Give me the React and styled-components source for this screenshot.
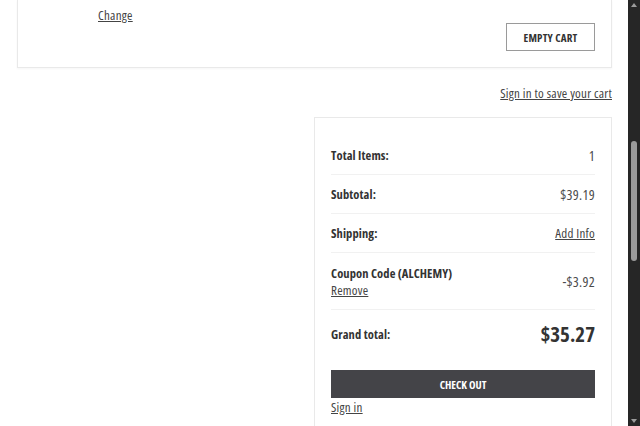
import styled, { createGlobalStyle } from 'styled-components';

const GlobalStyle = createGlobalStyle`
  html, body {
    margin: 0;
    padding: 0;
    background: #fff;
  }
  body {
    font-family: 'Open Sans', 'Liberation Sans', sans-serif;
    font-stretch: 75%;
    color: #333;
  }
`;

const Frame = styled.div`
  display: flex;
  height: 426px;
  overflow: hidden;
`;

const Main = styled.div`
  flex: 1;
  padding: 0 16px 0 17px;
`;

const TopCard = styled.div`
  display: flex;
  justify-content: space-between;
  align-items: flex-start;
  height: 68px;
  box-sizing: border-box;
  padding: 7px 16px 0 80px;
  border: 1px solid #e9e9e9;
  border-top: none;
  box-shadow: 0 1px 2px rgba(0, 0, 0, 0.04);
`;

const TextLink = styled.a`
  font-size: 13px;
  letter-spacing: 0.25px;
  color: #444;
  text-decoration: underline;
  cursor: pointer;
  line-height: 16px;
`;

const BlockLink = styled(TextLink)`
  display: block;
  width: fit-content;
`;

const OutlineButton = styled.button`
  margin-top: 16px;
  width: 89px;
  height: 28px;
  background: #fff;
  border: 1px solid #9a9a9a;
  font-family: inherit;
  font-stretch: 75%;
  font-size: 11px;
  font-weight: 700;
  color: #333;
  letter-spacing: 0.2px;
`;

const SaveRow = styled.div`
  display: flex;
  justify-content: flex-end;
  margin-top: 17px;
`;

const SummaryCard = styled.div`
  margin: 16px 0 0 auto;
  width: 298px;
  box-sizing: border-box;
  padding: 18px 16px 12px;
  border: 1px solid #e9e9e9;
`;

const Row = styled.div`
  display: flex;
  justify-content: space-between;
  align-items: center;
  height: ${(p) => p.h || 39}px;
  box-sizing: border-box;
  border-bottom: ${(p) => (p.last ? 'none' : '1px solid #f1f1f1')};
`;

const Label = styled.div`
  font-size: 12.5px;
  font-weight: 700;
  letter-spacing: 0.1px;
  color: #333;
  line-height: 17px;
`;

const Value = styled.div`
  font-size: ${(p) => (p.big ? 21 : 14)}px;
  font-weight: ${(p) => (p.big ? 700 : 400)};
  letter-spacing: ${(p) => (p.big ? 0 : 0.3)}px;
  color: ${(p) => (p.big ? '#333' : '#4a4a4a')};
`;

const Stack = styled.div`
  display: flex;
  flex-direction: column;
`;

const CheckoutButton = styled.button`
  display: block;
  width: 100%;
  height: 28px;
  margin-top: 12px;
  margin-bottom: 1px;
  background: #444448;
  border: none;
  color: #fff;
  font-family: inherit;
  font-stretch: 75%;
  font-size: 11px;
  font-weight: 700;
`;

const Scrollbar = styled.div`
  width: 12px;
  background: #262626;
  display: flex;
  flex-direction: column;
  align-items: center;
  justify-content: space-between;
  padding: 3px 0;
  box-sizing: border-box;
`;

const Thumb = styled.div`
  width: 6px;
  height: 120px;
  border-radius: 3px;
  background: #9b9b9b;
  margin-top: 134px;
  margin-bottom: auto;
`;

const Arrow = styled.div`
  width: 0;
  height: 0;
  border-left: 3px solid transparent;
  border-right: 3px solid transparent;
  ${(p) => (p.down ? 'border-top: 4px solid #9b9b9b;' : 'border-bottom: 4px solid #9b9b9b;')}
`;

export default function App() {
  return (
    <>
      <GlobalStyle />
      <Frame>
        <Main>
          <TopCard>
            <TextLink>Change</TextLink>
            <OutlineButton>EMPTY CART</OutlineButton>
          </TopCard>
          <SaveRow>
            <TextLink>Sign in to save your cart</TextLink>
          </SaveRow>
          <SummaryCard>
            <Row>
              <Label>Total Items:</Label>
              <Value>1</Value>
            </Row>
            <Row>
              <Label>Subtotal:</Label>
              <Value>$39.19</Value>
            </Row>
            <Row>
              <Label>Shipping:</Label>
              <TextLink>Add Info</TextLink>
            </Row>
            <Row h={57}>
              <Stack>
                <Label>Coupon Code (ALCHEMY)</Label>
                <TextLink>Remove</TextLink>
              </Stack>
              <Value>-$3.92</Value>
            </Row>
            <Row h={48} last>
              <Label>Grand total:</Label>
              <Value big>$35.27</Value>
            </Row>
            <CheckoutButton>CHECK OUT</CheckoutButton>
            <BlockLink>Sign in</BlockLink>
          </SummaryCard>
        </Main>
        <Scrollbar>
          <Arrow />
          <Thumb />
          <Arrow down />
        </Scrollbar>
      </Frame>
    </>
  );
}
